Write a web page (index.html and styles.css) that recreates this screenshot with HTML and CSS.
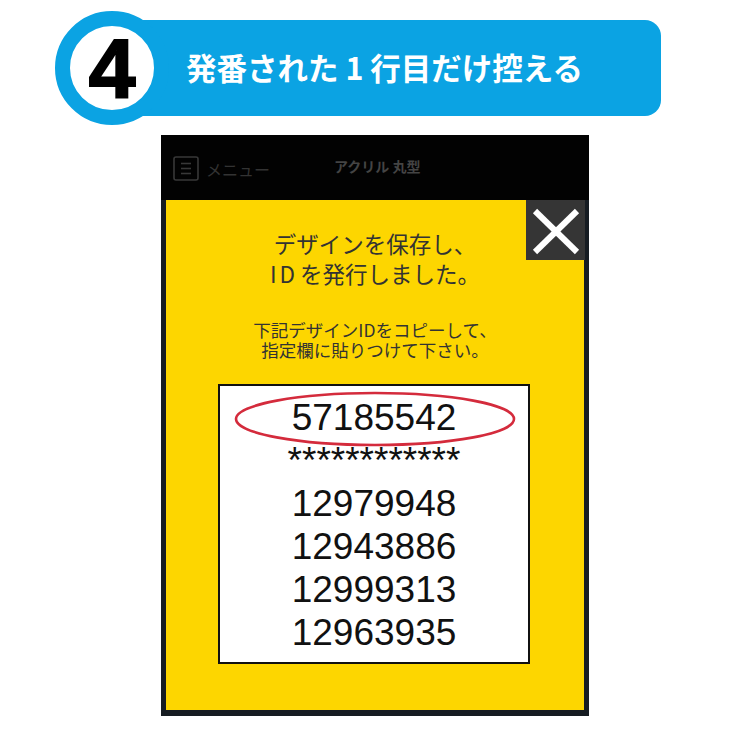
FILE: index.html
```html
<!DOCTYPE html>
<html lang="ja">
<head>
<meta charset="utf-8">
<link rel="stylesheet" href="styles.css">
</head>
<body>
<header class="head">
  <div class="banner"><span class="title">発番された 1 行目だけ控える</span></div>
  <div class="step"><span class="num">4</span></div>
</header>
<div class="phone">
  <div class="topbar">
    <div class="menu">
      <svg class="menu-icon" width="26" height="25" viewBox="0 0 26 25">
        <rect x="1" y="1" width="24" height="23" rx="2" fill="none" stroke="#383838" stroke-width="1.6"/>
        <line x1="8" y1="7.5" x2="18" y2="7.5" stroke="#383838" stroke-width="1.6"/>
        <line x1="8" y1="12.5" x2="18" y2="12.5" stroke="#383838" stroke-width="1.6"/>
        <line x1="8" y1="17.5" x2="18" y2="17.5" stroke="#383838" stroke-width="1.6"/>
      </svg>
      <span class="menu-label">メニュー</span>
    </div>
    <div class="product">アクリル 丸型</div>
  </div>
  <div class="modal">
    <button class="close" aria-label="閉じる">
      <svg width="59" height="60" viewBox="0 0 59 60">
        <line x1="9" y1="11" x2="51" y2="52" stroke="#fff" stroke-width="6"/>
        <line x1="51" y1="11" x2="9" y2="52" stroke="#fff" stroke-width="6"/>
      </svg>
    </button>
    <p class="lead">デザインを保存し、<br><span class="id">ID</span>を発行しました。</p>
    <p class="note">下記デザインIDをコピーして、<br>指定欄に貼りつけて下さい。</p>
    <div class="ids">
      <svg class="mark" width="310" height="70" viewBox="0 0 310 70">
        <ellipse cx="155" cy="33" rx="139" ry="26" fill="none" stroke="#d42b3c" stroke-width="2.6"/>
      </svg>
      <div class="id-line">57185542</div>
      <div class="id-line">************</div>
      <div class="id-line">12979948</div>
      <div class="id-line">12943886</div>
      <div class="id-line">12999313</div>
      <div class="id-line">12963935</div>
    </div>
  </div>
</div>
</body>
</html>
```
FILE: styles.css
```css
* { box-sizing: border-box; }
html, body { margin: 0; padding: 0; background: #fff; }
body {
  width: 732px;
  height: 732px;
  overflow: hidden;
  font-family: "Noto Sans CJK JP", "Noto Sans", sans-serif;
}
.head {
  position: relative;
  height: 135px;
  padding-top: 20px;
}
.banner {
  margin-left: 110px;
  width: 551px;
  height: 96px;
  background: #0ba3e3;
  border-radius: 0 16px 16px 0;
  display: flex;
  align-items: center;
  padding-left: 76px;
}
.title {
  color: #fff;
  font-weight: 700;
  font-size: 30.5px;
  white-space: pre;
  margin-top: -2px;
}
.step {
  position: absolute;
  left: 55px;
  top: 11px;
  width: 114px;
  height: 114px;
  border-radius: 50%;
  background: #fff;
  border: 15px solid #0ba3e3;
  display: flex;
  align-items: center;
  justify-content: center;
}
.num {
  font-family: "Liberation Sans", Arial, sans-serif;
  font-weight: 700;
  font-size: 84px;
  line-height: 1;
  color: #000;
  -webkit-text-stroke: 2px #000;
  margin-top: 2px;
}
.phone {
  margin-left: 161px;
  width: 428px;
  height: 581px;
  background: #161c22;
  display: flex;
  flex-direction: column;
}
.topbar {
  height: 65px;
  background: #020202;
  display: flex;
  align-items: center;
  padding-left: 12px;
}
.menu {
  display: flex;
  align-items: center;
  gap: 7px;
  margin-top: 2px;
}
.menu-label {
  color: #333;
  font-size: 16px;
}
.product {
  margin-left: 64px;
  color: #444;
  font-size: 14px;
  font-weight: 700;
  margin-top: -4px;
}
.modal {
  position: relative;
  margin: 0 5px;
  height: 510px;
  background: #fdd600;
  padding-top: 28px;
  text-align: center;
  color: #333;
}
.close {
  position: absolute;
  top: 0;
  right: -1px;
  width: 59px;
  height: 60px;
  padding: 0;
  border: 0;
  background: #353535;
  display: block;
}
.close svg { display: block; }
.lead {
  margin: 0;
  font-size: 22.5px;
  line-height: 30px;
}
.lead .id { letter-spacing: 3px; margin-right: 2px; }
.note {
  margin: 32px 0 0;
  font-size: 17.5px;
  line-height: 20px;
}
.ids {
  position: relative;
  margin: 24px 0 0 52px;
  width: 312px;
  border: 2px solid #111;
  background: #fff;
  padding: 10px 0 8px;
  font-family: "Liberation Sans", Arial, sans-serif;
  color: #111;
}
.mark {
  position: absolute;
  left: 0;
  top: 0;
}
.id-line {
  font-size: 37px;
  line-height: 43px;
}
```
